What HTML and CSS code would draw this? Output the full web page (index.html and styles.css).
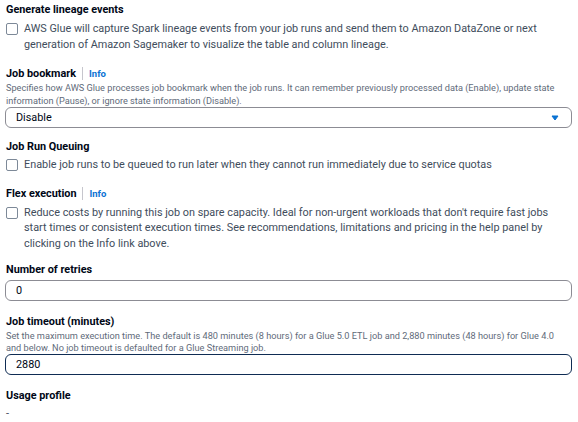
FILE: index.html
```html
<!DOCTYPE html>
<html>
<head>
<meta charset="utf-8">
<link rel="stylesheet" href="styles.css">
</head>
<body>
<div class="form">
  <section class="field f-lineage">
    <div class="label"><span class="label-text">Generate lineage events</span></div>
    <label class="check">
      <span class="box"></span>
      <span class="check-text">AWS Glue will capture Spark lineage events from your job runs and send them to Amazon DataZone or next generation of Amazon Sagemaker to visualize the table and column lineage.</span>
    </label>
  </section>

  <section class="field f-bookmark">
    <div class="label"><span class="label-text">Job bookmark</span><span class="sep"></span><a class="info">Info</a></div>
    <p class="desc">Specifies how AWS Glue processes job bookmark when the job runs. It can remember previously processed data (Enable), update state information (Pause), or ignore state information (Disable).</p>
    <div class="select">
      <span class="value">Disable</span>
      <svg class="caret" width="8" height="6" viewBox="0 0 8 6"><path d="M1 1h6L4 5z" fill="#0972d3" stroke="#0972d3" stroke-width="1" stroke-linejoin="round"/></svg>
    </div>
  </section>

  <section class="field f-queue">
    <div class="label"><span class="label-text">Job Run Queuing</span></div>
    <label class="check">
      <span class="box"></span>
      <span class="check-text">Enable job runs to be queued to run later when they cannot run immediately due to service quotas</span>
    </label>
  </section>

  <section class="field f-flex">
    <div class="label"><span class="label-text">Flex execution</span><span class="sep"></span><a class="info">Info</a></div>
    <label class="check">
      <span class="box"></span>
      <span class="check-text">Reduce costs by running this job on spare capacity. Ideal for non-urgent workloads that don't require fast jobs start times or consistent execution times. See recommendations, limitations and pricing in the help panel by clicking on the Info link above.</span>
    </label>
  </section>

  <section class="field f-retries">
    <div class="label"><span class="label-text">Number of retries</span></div>
    <div class="input"><span class="value">0</span></div>
  </section>

  <section class="field f-timeout">
    <div class="label"><span class="label-text">Job timeout (minutes)</span></div>
    <p class="desc">Set the maximum execution time. The default is 480 minutes (8 hours) for a Glue 5.0 ETL job and 2,880 minutes (48 hours) for Glue 4.0 and below. No job timeout is defaulted for a Glue Streaming job.</p>
    <div class="input focused"><span class="value">2880</span></div>
  </section>

  <section class="field f-usage">
    <div class="label"><span class="label-text">Usage profile</span></div>
    <div class="plain">-</div>
  </section>
</div>
</body>
</html>
```

FILE: styles.css
```css
* { box-sizing: border-box; }
html, body { margin: 0; padding: 0; background: #ffffff; }
body {
  font-family: Roboto, "Open Sans", "Liberation Sans", sans-serif;
  color: #414d5c;
  width: 578px;
  height: 422px;
  overflow: hidden;
}
.form {
  display: flex;
  flex-direction: column;
  padding: 1px 6px 0 6px;
}
.field { display: flex; flex-direction: column; }
.label {
  display: flex;
  align-items: center;
  height: 16px;
  font-size: 10.85px;
  font-weight: 700;
  color: #000716;
}
.sep {
  width: 1px;
  height: 13px;
  background: #c6c6cd;
  margin: 0 6px 0 6px;
}
.info {
  color: #0972d3;
  font-size: 9.5px;
  font-weight: 700;
}
.check {
  display: flex;
  align-items: flex-start;
  gap: 6px;
  font-size: 10.85px;
  line-height: 15.5px;
  color: #414d5c;
}
.box {
  flex: none;
  width: 12px;
  height: 12px;
  margin-top: 2px;
  border: 1.5px solid #7d8998;
  border-radius: 2px;
  background: #fff;
}
.check-text { flex: 1; }
.desc {
  margin: 0;
  max-width: 556px;
  font-size: 9.2px;
  line-height: 13px;
  color: #5f6b7a;
}
.select, .input {
  display: flex;
  align-items: center;
  justify-content: space-between;
  height: 21px;
  width: 567px;
  margin-left: -1px;
  padding: 0 12px 0 10px;
  border: 1px solid #8c8c94;
  border-radius: 6px;
  font-size: 10.85px;
  color: #000716;
}
.input.focused { border: 1.5px solid #0f2c53; }
.caret { display: block; }
.plain { font-size: 10.85px; color: #414d5c; line-height: 14px; }

.f-lineage .check { margin-top: 4px; }
.f-bookmark { margin-top: 13px; }
.f-bookmark .desc { margin-top: 0; margin-bottom: 0; }
.f-queue { margin-top: 10px; }
.f-queue .check { margin-top: 3px; }
.f-flex { margin-top: 13px; }
.f-flex .check { margin-top: 3px; }
.f-retries { margin-top: 10px; }
.f-retries .input { margin-top: 3px; }
.f-timeout { margin-top: 12px; }
.f-timeout .desc { margin-top: 1px; margin-bottom: 0; line-height: 12px; }
.f-usage { margin-top: 12px; }
.f-usage .plain { margin-top: 4px; }
```
